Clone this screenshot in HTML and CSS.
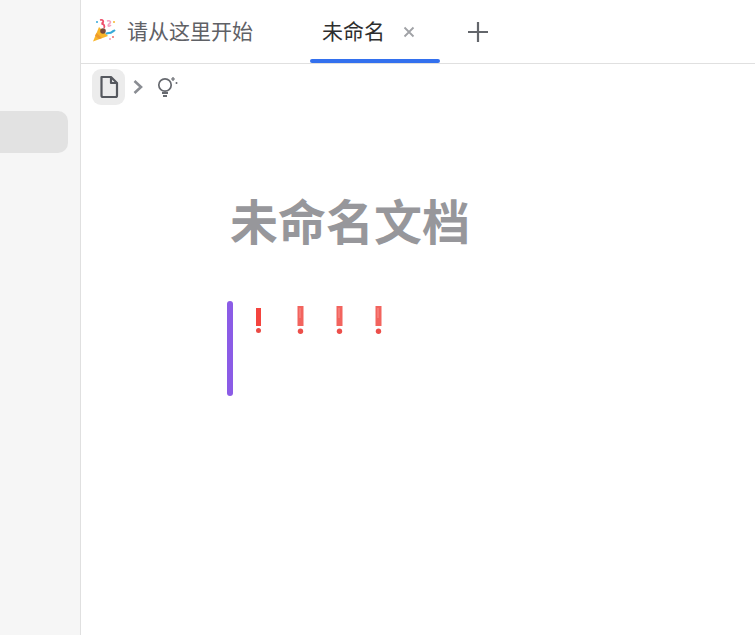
FILE: index.html
```html
<!DOCTYPE html>
<html lang="zh-CN">

<head>
    <meta charset="UTF-8">
    <title>未命名文档</title>
    <link rel="stylesheet" href="styles.css">
</head>

<body>
    <div class="sidebar">
        <div class="side-item"></div>
    </div>

    <div class="main">
        <!-- Tabs -->
        <div class="tabs">
            <div class="tab tab-start">
                <svg class="popper" viewBox="0 0 24 24" width="24" height="24">
                    <path d="M7 9 L16 18 L1 23.500 Z" fill="#f9b52a" />
                    <path d="M4.500 15 L10 20 L7 21 L3 17.500 Z" fill="#ee9a2c" />
                    <circle cx="11" cy="13" r="2.800" fill="#7a4a3a" />
                    <path d="M8 2 C12 1 12 5 9.500 5.500 C12 6 13 8 12 10" fill="none" stroke="#ee4f6a" stroke-width="1.800" />
                    <path d="M15 3 C18 2 20 4 17 6 C15 8 17 9 19 7" fill="none" stroke="#f3a0c0" stroke-width="1.600" />
                    <path d="M14 16 C16 14 18 16 20 14 C21 13 22 13 23 12" fill="none" stroke="#35a9d8" stroke-width="2" />
                    <circle cx="21" cy="19" r="1" fill="#ee6a6a" />
                    <circle cx="18" cy="21" r="1" fill="#f3a0b8" />
                    <circle cx="22" cy="4" r="1" fill="#f7b52c" />
                    <circle cx="5" cy="4" r="1" fill="#35a9d8" />
                </svg>
                <span>请从这里开始</span>
            </div>
            <div class="tab tab-active">
                <span>未命名</span>
                <svg class="tab-close" viewBox="0 0 12 12" width="12" height="12">
                    <path d="M1.500 1.500 L10.500 10.500 M10.500 1.500 L1.500 10.500" stroke="#a0a2a6" stroke-width="1.800" />
                </svg>
            </div>
            <svg class="tab-add" viewBox="0 0 22 22" width="22" height="22">
                <path d="M11 1 V21 M1 11 H21" stroke="#63666b" stroke-width="2.200" />
            </svg>
        </div>

        <!-- Breadcrumb -->
        <div class="crumbs">
            <div class="crumb-btn">
                <svg viewBox="0 0 20 24" width="20" height="24">
                    <path d="M2.500 2 H12 L18 8 V20.500 A1.500 1.500 0 0 1 16.500 22 H4 A1.500 1.500 0 0 1 2.500 20.500 Z M12 2 V8 H18" fill="none" stroke="#55585e" stroke-width="2.200" stroke-linejoin="round" />
                </svg>
            </div>
            <svg class="crumb-arrow" viewBox="0 0 10 14" width="10" height="14">
                <path d="M1.500 1 L8 7 L1.500 13" fill="none" stroke="#8a8d93" stroke-width="2.600" />
            </svg>
            <svg class="crumb-bulb" viewBox="0 0 22 22" width="22" height="22">
                <circle cx="8" cy="9" r="6.200" fill="none" stroke="#66696f" stroke-width="1.700" />
                <path d="M5 17 H11 M6 20 H10" stroke="#66696f" stroke-width="1.800" />
                <path d="M16 1 V5 M14 3 H18" stroke="#66696f" stroke-width="1.200" />
                <circle cx="19.500" cy="7" r="1" fill="#66696f" />
            </svg>
        </div>

        <!-- Document -->
        <div class="doc">
            <h1 class="doc-title">未命名文档</h1>
            <div class="callout">
                <div class="callout-bar"></div>
                <div class="marks">
                    <svg class="mark mark-first" viewBox="0 0 7 25" width="7" height="25">
                        <rect x="1" y="0" width="5" height="18" fill="#f4443e" />
                        <circle cx="3.500" cy="22.500" r="2.500" fill="#ea4a44" />
                    </svg>
                    <svg class="mark" viewBox="0 0 7 28" width="7" height="28">
                        <rect x="0.500" y="0" width="6" height="20" fill="#f2645e" />
                        <rect x="2" y="2" width="2" height="10" fill="#f67a75" />
                        <circle cx="3.500" cy="25.300" r="2.700" fill="#ec4f4a" />
                    </svg>
                    <svg class="mark" viewBox="0 0 7 28" width="7" height="28">
                        <rect x="0.500" y="0" width="6" height="20" fill="#f2645e" />
                        <rect x="2" y="2" width="2" height="10" fill="#f67a75" />
                        <circle cx="3.500" cy="25.300" r="2.700" fill="#ec4f4a" />
                    </svg>
                    <svg class="mark" viewBox="0 0 7 28" width="7" height="28">
                        <rect x="0.500" y="0" width="6" height="20" fill="#f2645e" />
                        <rect x="2" y="2" width="2" height="10" fill="#f67a75" />
                        <circle cx="3.500" cy="25.300" r="2.700" fill="#ec4f4a" />
                    </svg>
                </div>
            </div>
        </div>
    </div>
</body>

</html>
```

FILE: styles.css
```css
* {
    margin: 0;
    padding: 0;
    box-sizing: border-box;
}

html,
body {
    height: 100%;
    overflow: hidden;
}

body {
    display: flex;
    font-family: "Liberation Sans", "Noto Sans CJK SC", sans-serif;
    background: #fff;
    color: #333;
}

.sidebar {
    width: 81px;
    flex-shrink: 0;
    padding: 111px 12px 0 0;
    background: #f6f6f6;
    border-right: 1px solid #e0e0e0;
}

.side-item {
    height: 42px;
    background: #e2e2e2;
    border-radius: 0 10px 10px 0;
}

.main {
    flex: 1;
    min-width: 0;
}

.tabs {
    display: flex;
    align-items: center;
    height: 64px;
    padding-left: 11px;
    border-bottom: 1px solid #e0e0e0;
}

.tab {
    display: flex;
    align-items: center;
    height: 63px;
    padding-bottom: 4px;
    font-size: 21px;
    color: #5f6166;
}

.tab-start {
    width: 218px;
}

.popper {
    margin-right: 11px;
}

.tab-active {
    position: relative;
    width: 130px;
    padding-left: 12px;
    color: #2e2e2e;
}

.tab-active::after {
    content: "";
    position: absolute;
    left: 0;
    right: 0;
    bottom: 0;
    height: 4px;
    background: #3370ee;
    border-radius: 2px;
}

.tab-close {
    margin: 4px 0 0 18px;
}

.tab-add {
    margin-left: 27px;
}

.crumbs {
    display: flex;
    align-items: center;
    height: 46px;
    padding-left: 11px;
}

.crumb-btn {
    display: flex;
    align-items: center;
    justify-content: center;
    width: 33px;
    height: 36px;
    background: #ececec;
    border-radius: 9px;
}

.crumb-arrow {
    margin-left: 8px;
}

.crumb-bulb {
    margin-left: 14px;
}

.doc {
    padding: 82px 0 0 146px;
}

.doc-title {
    height: 64px;
    padding-left: 3px;
    font-size: 48px;
    line-height: 64px;
    font-weight: 700;
    color: #97979b;
}

.callout {
    display: flex;
    height: 95px;
    margin-top: 45px;
}

.callout-bar {
    width: 6px;
    background: #8b5ce6;
    border-radius: 3px;
}

.marks {
    display: flex;
    align-items: flex-start;
    gap: 32px;
    padding: 5px 0 0 22px;
}

.mark-first {
    margin-top: 2px;
    margin-right: 3px;
}
```
